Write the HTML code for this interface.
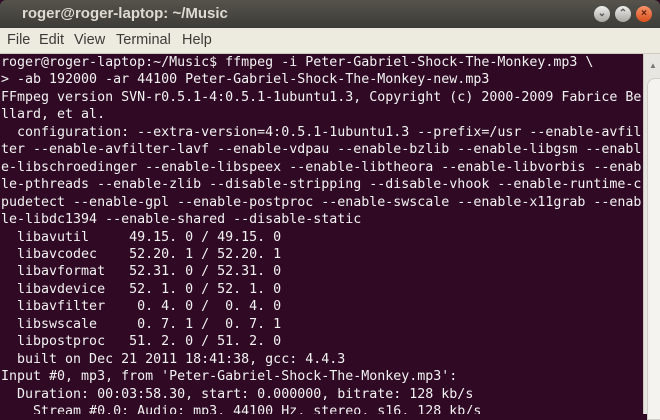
<!DOCTYPE html>
<html><head><style>
body{margin:0;width:660px;height:414px;overflow:hidden;background:#300a24;font-family:"Liberation Sans",sans-serif}
#title{position:absolute;left:0;top:0;width:660px;height:28px;background:linear-gradient(#55534c,#3c3b37);border-radius:6px 6px 0 0}
#title span{position:absolute;left:22px;top:5px;color:#dfdbd2;font-weight:bold;font-size:15px}
.btn{position:absolute;top:6px;width:16px;height:16px;border-radius:50%;background:linear-gradient(#eeeeec,#a8a6a0);font-size:10px;text-align:center;line-height:16px;color:#555;font-weight:bold}
#menu{position:absolute;left:0;top:28px;width:660px;height:25px;background:#edeadf;border-bottom:1px solid #cfcbbf}
#menu span{position:absolute;top:4px;font-size:14.5px;color:#3c3b37}
#term{position:absolute;left:0;top:54px;width:643px;height:360px;background:#300a24;overflow:hidden}
pre{margin:0;padding:0 0 0 1px;font-family:"DejaVu Sans Mono",monospace;font-size:13.3px;line-height:17.45px;color:#f2f2f2;white-space:pre}
#sb{position:absolute;left:643px;top:54px;width:17px;height:360px;background:#e8e6e1;border-left:1px solid #cfcbc4}
#thumb{position:absolute;left:3px;top:24px;width:14px;height:340px;background:#f4f3f0;border-radius:8px 0 0 0;border:1px solid #d0cec8}
</style></head><body>
<div id="title"><span>roger@roger-laptop: ~/Music</span>
<div class="btn" style="left:594px">&#8964;</div>
<div class="btn" style="left:615px">&#8963;</div>
<div class="btn" style="left:636px;background:linear-gradient(#f7946a,#d94f1c);color:#5a2010">×</div></div>
<div id="menu"><span style="left:7px">File</span><span style="left:39px">Edit</span><span style="left:74px">View</span><span style="left:116px">Terminal</span><span style="left:182px">Help</span></div>
<div id="term"><pre>roger@roger-laptop:~/Music$ ffmpeg -i Peter-Gabriel-Shock-The-Monkey.mp3 \
&gt; -ab 192000 -ar 44100 Peter-Gabriel-Shock-The-Monkey-new.mp3
FFmpeg version SVN-r0.5.1-4:0.5.1-1ubuntu1.3, Copyright (c) 2000-2009 Fabrice Be
llard, et al.
  configuration: --extra-version=4:0.5.1-1ubuntu1.3 --prefix=/usr --enable-avfil
ter --enable-avfilter-lavf --enable-vdpau --enable-bzlib --enable-libgsm --enabl
e-libschroedinger --enable-libspeex --enable-libtheora --enable-libvorbis --enab
le-pthreads --enable-zlib --disable-stripping --disable-vhook --enable-runtime-c
pudetect --enable-gpl --enable-postproc --enable-swscale --enable-x11grab --enab
le-libdc1394 --enable-shared --disable-static
  libavutil     49.15. 0 / 49.15. 0
  libavcodec    52.20. 1 / 52.20. 1
  libavformat   52.31. 0 / 52.31. 0
  libavdevice   52. 1. 0 / 52. 1. 0
  libavfilter    0. 4. 0 /  0. 4. 0
  libswscale     0. 7. 1 /  0. 7. 1
  libpostproc   51. 2. 0 / 51. 2. 0
  built on Dec 21 2011 18:41:38, gcc: 4.4.3
Input #0, mp3, from 'Peter-Gabriel-Shock-The-Monkey.mp3':
  Duration: 00:03:58.30, start: 0.000000, bitrate: 128 kb/s
    Stream #0.0: Audio: mp3, 44100 Hz, stereo, s16, 128 kb/s</pre></div>
<div id="sb"><div style="position:absolute;left:5px;top:7px;font-size:8px;color:#777">▲</div><div id="thumb"></div></div>
</body></html>
